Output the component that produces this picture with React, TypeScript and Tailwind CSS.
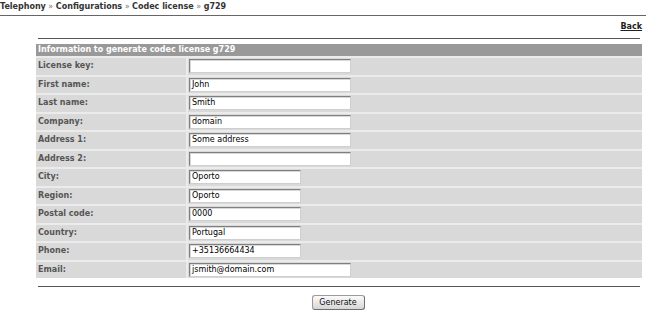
import React from "react";

const rows: { label: string; value: string; short?: boolean }[] = [
  { label: "License key:", value: "" },
  { label: "First name:", value: "John" },
  { label: "Last name:", value: "Smith" },
  { label: "Company:", value: "domain" },
  { label: "Address 1:", value: "Some address" },
  { label: "Address 2:", value: "" },
  { label: "City:", value: "Oporto", short: true },
  { label: "Region:", value: "Oporto", short: true },
  { label: "Postal code:", value: "0000", short: true },
  { label: "Country:", value: "Portugal", short: true },
  { label: "Phone:", value: "+35136664434", short: true },
  { label: "Email:", value: "jsmith@domain.com" },
];

function Sep() {
  return <span className="font-normal text-[#777]"> » </span>;
}

export default function App() {
  return (
    <div
      className="w-[646px] h-[318px] bg-white overflow-hidden text-[8px] text-[#222]"
      style={{ fontFamily: '"DejaVu Sans", Verdana, sans-serif' }}
    >
      <div className="h-[15px] pt-[2px] font-bold text-[#333] leading-[10px]">
        Telephony<Sep />Configurations<Sep />Codec license<Sep />g729
      </div>
      <div className="h-px bg-[#666]" />
      <div className="flex justify-end pr-[4px] pt-[6px] h-[22px]">
        <span className="font-bold underline text-[#222] leading-[10px]">Back</span>
      </div>
      <div className="ml-[36px] mr-[4px]">
        <div className="mx-[2px] h-px bg-[#555]" />
        <div className="mt-[5px] bg-[#ebebeb]">
          <div className="h-[12px] bg-[#999] text-white font-bold leading-[12px] pl-[2px]">
            Information to generate codec license g729
          </div>
          <div className="mt-[2px] grid grid-cols-[150px_1fr] gap-x-[2px] gap-y-[2px]">
            {rows.map((r) => (
              <React.Fragment key={r.label}>
                <div className="h-[16.5px] bg-[#d9d9d9] flex items-center pl-[2px] font-bold text-[#555]">
                  {r.label}
                </div>
                <div className="h-[16.5px] bg-[#d9d9d9] flex items-center">
                  <div
                    className={`${r.short ? "w-[112px]" : "w-[162px]"} ml-[1px] h-[14px] bg-white border border-t-[#7f7f7f] border-l-[#7f7f7f] border-b-[#cfcfcf] border-r-[#cfcfcf] shadow-[inset_1px_1px_0_#d8d8d8] flex items-center pl-[2px] text-black leading-[10px]`}
                  >
                    {r.value}
                  </div>
                </div>
              </React.Fragment>
            ))}
          </div>
        </div>
        <div className="mt-[8px] mx-[2px] h-px bg-[#555]" />
        <div className="flex justify-center mt-[8px] pr-[2px]">
          <div className="w-[53px] h-[15px] rounded-[3px] border border-[#9a9a9a] border-b-[#6f6f6f] border-r-[#6f6f6f] bg-gradient-to-b from-[#fbfbfb] to-[#d6d6d6] flex items-center justify-center text-[#111] leading-[10px]">
            Generate
          </div>
        </div>
      </div>
    </div>
  );
}
